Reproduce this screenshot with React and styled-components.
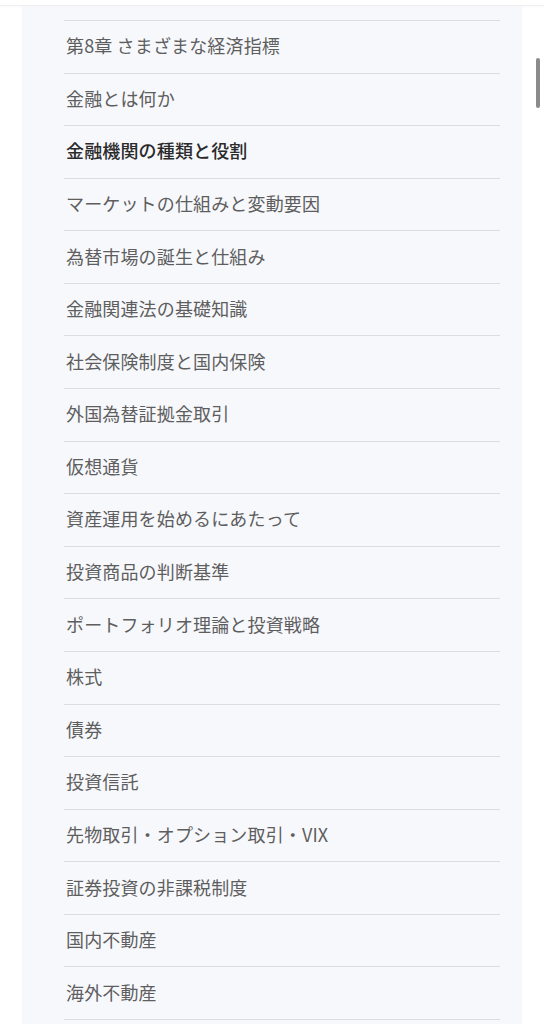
import React from "react";
import styled, { createGlobalStyle } from "styled-components";

const GlobalStyle = createGlobalStyle`
  html, body {
    margin: 0;
    padding: 0;
    background: #ffffff;
  }
  body {
    font-family: "Noto Sans CJK JP", "Noto Sans", sans-serif;
    overflow: hidden;
  }
`;

const Page = styled.div`
  position: relative;
  width: 544px;
  height: 1024px;
  overflow: hidden;
  background: #ffffff;
`;

const TopBar = styled.div`
  height: 5px;
  background: #ffffff;
  border-bottom: 1px solid #f1eef0;
  box-shadow: 0 1px 2px rgba(0, 0, 0, 0.03);
`;

const Panel = styled.div`
  margin-left: 22px;
  width: 500px;
  box-sizing: border-box;
  padding: 14px 22px 0 42px;
  background: #f7f8fc;
  min-height: 1018px;
`;

const List = styled.ul`
  list-style: none;
  margin: 0;
  padding: 0;
  border-bottom: 1px solid #dcdde3;
`;

const Item = styled.li`
  height: 52.58px;
  box-sizing: border-box;
  border-top: 1px solid #dcdde3;
  display: flex;
  align-items: center;
  padding: 0 0 3px 2px;
  font-size: 18px;
  letter-spacing: 0.15px;
  color: ${(p) => (p.$active ? "#2a2a2a" : "#5e5e5e")};
  font-weight: ${(p) => (p.$active ? 500 : 400)};
`;

const ScrollThumb = styled.div`
  position: absolute;
  left: 536px;
  top: 58px;
  width: 4px;
  height: 50px;
  border-radius: 2px;
  background: #8b8b8b;
`;

const items = [
  "第8章 さまざまな経済指標",
  "金融とは何か",
  "金融機関の種類と役割",
  "マーケットの仕組みと変動要因",
  "為替市場の誕生と仕組み",
  "金融関連法の基礎知識",
  "社会保険制度と国内保険",
  "外国為替証拠金取引",
  "仮想通貨",
  "資産運用を始めるにあたって",
  "投資商品の判断基準",
  "ポートフォリオ理論と投資戦略",
  "株式",
  "債券",
  "投資信託",
  "先物取引・オプション取引・VIX",
  "証券投資の非課税制度",
  "国内不動産",
  "海外不動産",
];

const App = () => {
  return (
    <Page>
      <GlobalStyle />
      <TopBar />
      <Panel>
        <List>
          {items.map((label, i) => (
            <Item key={label} $active={i === 2}>
              {label}
            </Item>
          ))}
        </List>
      </Panel>
      <ScrollThumb />
    </Page>
  );
};

export default App;
